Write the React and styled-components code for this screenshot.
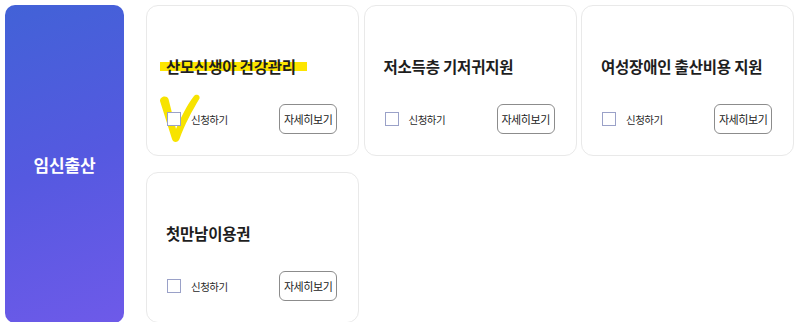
import React from 'react';
import styled, { createGlobalStyle } from 'styled-components';

const GlobalStyle = createGlobalStyle`
  body {
    margin: 0;
    background: #ffffff;
    font-family: "Noto Sans CJK KR", "Noto Sans", sans-serif;
  }
`;

const Page = styled.div`
  display: flex;
  gap: 22px;
  padding: 5px;
  width: 800px;
  height: 322px;
  box-sizing: border-box;
  overflow: hidden;
`;

const CategoryPanel = styled.div`
  flex: 0 0 119px;
  height: 318px;
  border-radius: 10px;
  background: linear-gradient(160deg, #4262d7 0%, #5559e0 50%, #6e5ae9 100%);
  display: flex;
  align-items: center;
  justify-content: center;
  color: #ffffff;
  font-size: 17px;
  font-weight: 700;
  letter-spacing: -0.2px;
`;

const CardGrid = styled.div`
  display: grid;
  grid-template-columns: repeat(3, 213px);
  grid-auto-rows: 151px;
  column-gap: 4.5px;
  row-gap: 16px;
`;

const Card = styled.div`
  position: relative;
  box-sizing: border-box;
  border: 1px solid #e9e9e9;
  border-radius: 12px;
  background: #ffffff;
  padding: 50px 21px 0 19px;
  display: flex;
  flex-direction: column;
`;

const Title = styled.div`
  position: relative;
  z-index: 1;
  font-size: 15.5px;
  line-height: 20px;
  font-weight: 700;
  color: #1e1e1e;
  letter-spacing: -0.2px;
  white-space: nowrap;
`;

const Footer = styled.div`
  margin-top: 28px;
  display: flex;
  align-items: center;
  justify-content: space-between;
`;

const Apply = styled.label`
  display: flex;
  align-items: center;
  gap: 10px;
  font-size: 10.5px;
  color: #2a2a2a;
  letter-spacing: -0.5px;
`;

const Checkbox = styled.span`
  position: relative;
  z-index: 3;
  box-sizing: border-box;
  width: 14px;
  height: 14px;
  margin-left: 1px;
  border: 1.3px solid #9aa1c8;
  background: #ffffff;
`;

const DetailButton = styled.button`
  box-sizing: border-box;
  height: 30px;
  padding: 0 3.5px;
  border: 1px solid #8c8c8c;
  border-radius: 6px;
  background: #ffffff;
  font-family: inherit;
  font-size: 11px;
  letter-spacing: -0.4px;
  color: #222222;
`;

const Highlight = styled.span`
  position: absolute;
  left: 13px;
  top: 56px;
  width: 147px;
  height: 9px;
  background: #fde500;
  z-index: 0;
`;

const CheckMark = styled.svg`
  position: absolute;
  left: 12px;
  top: 86px;
  z-index: 2;
`;

const services = [
  { id: 1, title: '산모신생아 건강관리', marked: true },
  { id: 2, title: '저소득층 기저귀지원' },
  { id: 3, title: '여성장애인 출산비용 지원' },
  { id: 4, title: '첫만남이용권' },
];

const ServiceCard = ({ service }) => (
  <Card>
    {service.marked && <Highlight />}
    <Title>{service.title}</Title>
    <Footer>
      <Apply>
        <Checkbox />
        신청하기
      </Apply>
      <DetailButton>자세히보기</DetailButton>
    </Footer>
    {service.marked && (
      <CheckMark width="44" height="52" viewBox="0 0 44 52">
        <path
          d="M1 9 C1 4 8 3 9.5 7 L17 37 C22 25 28 13 35 4 C37 1.5 41.5 3 40.5 6.5 C33 19 25.5 33 20.5 47 C19 51 14 51 13 47 Z"
          fill="#f7e300"
        />
      </CheckMark>
    )}
  </Card>
);

const App = () => {
  return (
    <>
      <GlobalStyle />
      <Page>
        <CategoryPanel>임신출산</CategoryPanel>
        <CardGrid>
          {services.map((service) => (
            <ServiceCard service={service} key={service.id} />
          ))}
        </CardGrid>
      </Page>
    </>
  );
};

export default App;
